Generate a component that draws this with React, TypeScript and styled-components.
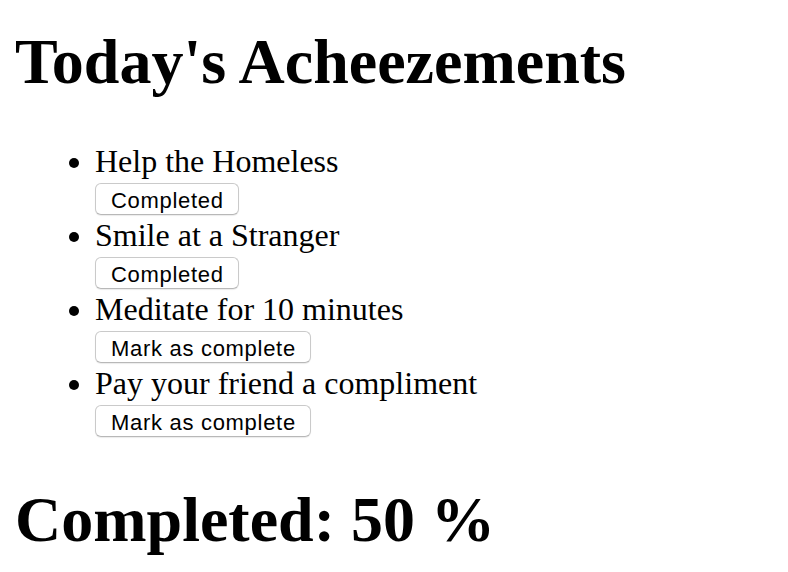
import React from "react";
import styled, { createGlobalStyle } from "styled-components";

const GlobalStyle = createGlobalStyle`
  html, body {
    margin: 0;
    padding: 0;
    background: #ffffff;
  }
  body {
    font-family: "Liberation Serif", "Times New Roman", serif;
    color: #000000;
  }
`;

const Page = styled.div`
  padding: 0 16px 0 15px;
`;

const Heading = styled.h1<{ $top?: number; $bottom?: number }>`
  font-family: "Liberation Serif", "Times New Roman", serif;
  font-weight: bold;
  font-size: 64px;
  line-height: normal;
  margin: ${(p) => p.$top ?? 44}px 0 ${(p) => p.$bottom ?? 44}px;
`;

const TaskList = styled.ul`
  margin: 0;
  padding-left: 80px;
  font-size: 32px;
  list-style: disc;
`;

const TaskItem = styled.li`
  line-height: normal;
`;

const TaskLabel = styled.div`
  line-height: normal;
`;

const ButtonRow = styled.div`
  display: flex;
  align-items: center;
  height: 37px;
`;

const TaskButton = styled.button`
  box-sizing: border-box;
  height: 32px;
  padding: 4px 14px 0 15px;
  margin: 0;
  font-family: "Liberation Sans", Arial, sans-serif;
  font-size: 22px;
  letter-spacing: 0.7px;
  line-height: 25px;
  color: #000000;
  background: #ffffff;
  border: 1px solid #cacaca;
  border-bottom-color: #b8b8b8;
  border-radius: 6px;
  box-shadow: 0 1px 1px rgba(0, 0, 0, 0.08);
  cursor: pointer;
`;

const tasks = [
  { name: "Help the Homeless", done: true },
  { name: "Smile at a Stranger", done: true },
  { name: "Meditate for 10 minutes", done: false },
  { name: "Pay your friend a compliment", done: false },
];

export default function App() {
  const completed = tasks.filter((t) => t.done).length;
  const percent = Math.round((completed / tasks.length) * 100);
  return (
    <>
      <GlobalStyle />
      <Page>
        <Heading $top={25}>Today's Acheezements</Heading>
        <TaskList>
          {tasks.map((t) => (
            <TaskItem key={t.name}>
              <TaskLabel>{t.name}</TaskLabel>
              <ButtonRow>
                <TaskButton>{t.done ? "Completed" : "Mark as complete"}</TaskButton>
              </ButtonRow>
            </TaskItem>
          ))}
        </TaskList>
        <Heading $bottom={0}>Completed: {percent} %</Heading>
      </Page>
    </>
  );
}
